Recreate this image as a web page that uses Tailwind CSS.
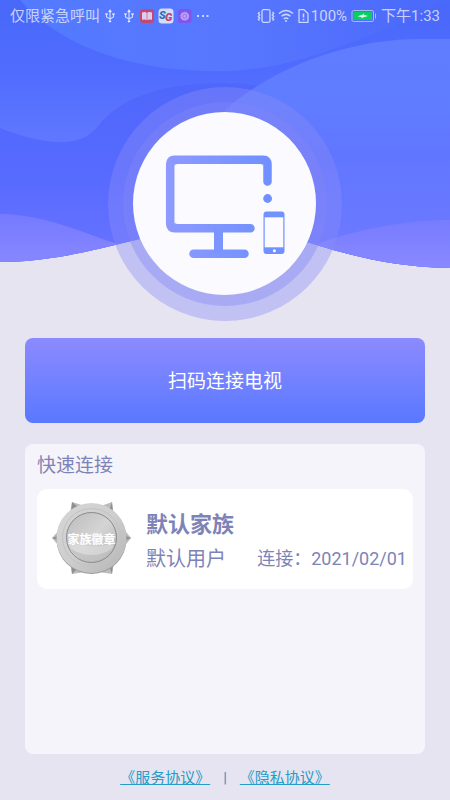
<!DOCTYPE html>
<html lang="zh-CN">
<head>
<meta charset="utf-8">
<meta name="viewport" content="width=device-width, initial-scale=1">
<title>扫码连接电视</title>
<script src="https://cdn.jsdelivr.net/npm/@tailwindcss/browser@4"></script>
</head>
<body class="bg-[#e6e4f0] font-['Roboto','Noto_Sans_CJK_SC',sans-serif]">
<div class="relative isolate flex min-h-screen flex-col">

  <!-- Wave backdrop -->
  <svg class="absolute inset-x-0 top-0 -z-10 h-[270px] w-full" viewBox="0 0 450 270" preserveAspectRatio="none" aria-hidden="true">
    <defs>
      <linearGradient id="base" gradientUnits="userSpaceOnUse" x1="0" y1="0" x2="0" y2="142"><stop offset="0" stop-color="#4868fa"/><stop offset=".5" stop-color="#506cfe"/><stop offset="1" stop-color="#6078ff"/></linearGradient>
      <linearGradient id="top" x1="0" y1="0" x2="1" y2="0"><stop offset="0" stop-color="#527aff"/><stop offset=".5" stop-color="#5877ff"/><stop offset="1" stop-color="#4a68fa"/></linearGradient>
      <linearGradient id="mid" gradientUnits="userSpaceOnUse" x1="0" y1="83" x2="0" y2="250"><stop offset="0" stop-color="#4f67fb"/><stop offset=".5" stop-color="#566aff"/><stop offset="1" stop-color="#6672ff"/></linearGradient>
      <linearGradient id="right" gradientUnits="userSpaceOnUse" x1="0" y1="39" x2="0" y2="268"><stop offset="0" stop-color="#5f7dff"/><stop offset=".3" stop-color="#607cff"/><stop offset=".5" stop-color="#6176ff"/><stop offset="1" stop-color="#6e7aff"/></linearGradient>
      <linearGradient id="low" gradientUnits="userSpaceOnUse" x1="0" y1="214" x2="0" y2="266"><stop offset="0" stop-color="#757aff"/><stop offset="1" stop-color="#8888ff"/></linearGradient>
      <clipPath id="edge"><path d="M0 0H450V268C395 267 355 257 310 243C260 228 190 227 140 239C95 250 50 262 0 262Z"/></clipPath>
    </defs>
    <g clip-path="url(#edge)">
      <rect width="450" height="270" fill="url(#base)"/>
      <path d="M20 0C60 46 130 71 215 71C285 71 330 50 390 28L450 0Z" fill="url(#top)"/>
      <path d="M0 128C28 139 78 154 98 126C124 92 175 83 222 83C290 83 345 110 450 130V270H0Z" fill="url(#mid)"/>
      <path d="M225 110C275 66 350 39 420 39H450V270H225Z" fill="url(#right)"/>
      <path d="M0 214C45 214 85 234 115 243L150 253V270H0Z" fill="url(#low)"/>
      <path d="M450 220C405 220 355 230 320 243L290 255V270H450Z" fill="url(#low)"/>
    </g>
  </svg>

  <!-- Status bar -->
  <header class="flex h-8 items-center justify-between px-[10px] text-[15px] leading-8 text-white/70">
    <div class="flex items-center gap-[3px]">
      <span>仅限紧急呼叫</span>
      <svg class="h-4 w-4" viewBox="0 0 16 16" fill="none" stroke="currentColor" stroke-width="1.2" aria-hidden="true"><path d="M7 2V14M3.500 6V9L7 11L10.500 9V6"/><path d="M5.500 4L7 1.500L8.500 4ZM2.500 5.500h2v1h-2zM9.500 5.500h2v1h-2zM6 13h2v1H6z" fill="currentColor" stroke-width=".5"/></svg>
      <svg class="h-4 w-4" viewBox="0 0 16 16" fill="none" stroke="currentColor" stroke-width="1.2" aria-hidden="true"><path d="M7 2V14M3.500 6V9L7 11L10.500 9V6"/><path d="M5.500 4L7 1.500L8.500 4ZM2.500 5.500h2v1h-2zM9.500 5.500h2v1h-2zM6 13h2v1H6z" fill="currentColor" stroke-width=".5"/></svg>
      <svg class="-ml-[2px] h-4 w-4" viewBox="0 0 16 16" aria-hidden="true"><rect x="1" y="1" width="14" height="14" rx="3" fill="#bf4a78"/><path d="M3 4.500Q6 3.500 7.700 4.700V12Q6 11 3 11.800ZM13 4.500Q10 3.500 8.300 4.700V12Q10 11 13 11.800Z" fill="#e0cdec"/></svg>
      <svg class="h-4 w-4" viewBox="0 0 16 16" aria-hidden="true"><rect x="0.500" y="0.500" width="15" height="15" rx="3.500" fill="#d5dcff"/><text x="1" y="11" font-family="Roboto" font-size="11" font-weight="900" font-style="italic" fill="#2474b4">S</text><text x="7" y="13" font-family="Roboto" font-size="11" font-weight="900" font-style="italic" fill="#c04468">G</text></svg>
      <svg class="h-4 w-4" viewBox="0 0 16 16" aria-hidden="true"><rect x="1" y="1" width="13.500" height="14" rx="2.500" fill="#8055ee"/><circle cx="7.700" cy="8.200" r="4" fill="#b9a0f5" stroke="#b9a0f5" stroke-dasharray="1.500 1"/><circle cx="7.700" cy="8.200" r="2" fill="none" stroke="#8d68ed" stroke-width=".8"/></svg>
      <svg class="h-4 w-4" viewBox="0 0 16 16" fill="currentColor" aria-hidden="true"><path d="M1 7h2v2H1zM6 7h2v2H6zM10.500 7h2v2h-2z"/></svg>
    </div>
    <div class="flex items-center">
      <svg class="h-4 w-5" viewBox="0 0 20 16" fill="none" stroke="currentColor" stroke-width="1.300" aria-hidden="true"><rect x="5" y="1.700" width="8" height="12.600" rx="1.500"/><path d="M2.500 4L1.300 5.500L2.700 7L1.300 8.500L2.700 10L1.300 11.500L2.500 12.500M15.500 4L16.700 5.500L15.300 7L16.700 8.500L15.300 10L16.700 11.500L15.500 12.500"/></svg>
      <svg class="h-4 w-[18px]" viewBox="0 0 18 16" fill="none" stroke="currentColor" stroke-width="1.500" aria-hidden="true"><path d="M2 5.500Q9 -.5 16 5.500M4.500 8.300Q9 4.500 13.500 8.300M6.700 11Q9 9 11.300 11"/><circle cx="9" cy="13" r="1" fill="currentColor" stroke="none"/></svg>
      <svg class="h-4 w-4" viewBox="0 0 16 16" fill="none" stroke="currentColor" stroke-width="1.300" aria-hidden="true"><path d="M4 1.700H9L13 5.500V14.300H4Z" stroke-linejoin="round"/><path d="M8.500 5.500V9.500M8.500 10.700V12.200" stroke-width="1.600"/></svg>
      <span>100%</span>
      <svg class="mx-1 h-4 w-[26px]" viewBox="0 0 26 16" fill="none" aria-hidden="true"><rect x="1" y="2.500" width="21.500" height="11" rx="1.500" stroke="#a9baf8" stroke-width="1"/><rect x="2.500" y="4" width="18.500" height="8" fill="#08cf63"/><path d="M6.500 8.200L12 6.500V5.500L13.500 7L17 8L11.500 9.500V10.500L10 9Z" fill="#e5ffee"/><path d="M24.500 5.500V10.500" stroke="#a9baf8" stroke-width="1"/></svg>
      <span>下午1:33</span>
    </div>
  </header>

  <main class="flex flex-1 flex-col px-[25px] pt-[55px]">
    <!-- Television and phone emblem -->
    <svg class="mx-auto h-[234px] w-[234px] shrink-0" viewBox="0 0 234 234" fill="none" role="img" aria-label="电视与手机">
      <defs><linearGradient id="tv" gradientUnits="userSpaceOnUse" x1="57" y1="0" x2="164" y2="0"><stop offset="0" stop-color="#8e9aff"/><stop offset="1" stop-color="#7090ff"/></linearGradient></defs>
      <circle cx="117" cy="117" r="117" fill="#8a8cf8" fill-opacity=".4"/>
      <circle cx="117" cy="117" r="102" fill="#8486f8" fill-opacity=".38"/>
      <circle cx="116.500" cy="116.500" r="91.500" fill="#fafaff"/>
      <g stroke="url(#tv)" stroke-width="8.500" stroke-linecap="round">
        <path d="M159.500 94.500V77Q159.500 72.800 155.500 72.800H66.500Q62.200 72.800 62.200 77V137Q62.200 141.200 66.500 141.200H142.500"/>
        <path d="M85.500 166.700H136.500"/>
      </g>
      <path d="M110.500 142V166" stroke="#7b94ff" stroke-width="9"/>
      <path d="M66.500 80V77H69.500Q66.500 77 66.500 80ZM155.300 80V77H152.300Q155.300 77 155.300 80ZM66.500 134V137H69.500Q66.500 137 66.500 134Z" fill="#7f96ff"/>
      <circle cx="159.600" cy="111.500" r="4.400" fill="#7090ff"/>
      <rect x="155.500" y="124.500" width="21" height="42.500" rx="3" fill="#7191ff"/>
      <rect x="156.700" y="130.300" width="18.600" height="30" fill="#fafaff"/>
      <circle cx="166.400" cy="163.700" r="1.500" fill="#fff"/>
    </svg>

    <button type="button" class="mt-[17px] h-[85px] w-full shrink-0 rounded-lg bg-linear-to-b from-[#8c8aff] to-[#5878ff] pt-1 text-[19px] text-white">扫码连接电视</button>

    <section class="mt-[21px] flex-1 rounded-lg bg-[#f5f4fa] px-3 pt-[10px] text-[#7e83b6]" aria-labelledby="quick">
      <h2 id="quick" class="text-[19px] leading-6">快速连接</h2>
      <button type="button" class="mt-[11px] flex h-[100px] w-full items-center rounded-[10px] bg-white pr-[6px] pl-[14px] text-left">
        <svg class="h-20 w-20 shrink-0" viewBox="0 0 80 80" aria-hidden="true">
          <defs>
            <linearGradient id="rim" x1="0" y1="0" x2="1" y2="1"><stop offset="0" stop-color="#d6d6d6"/><stop offset=".5" stop-color="#cecece"/><stop offset="1" stop-color="#b4b4b4"/></linearGradient>
            <linearGradient id="disc" x1="0" y1="0" x2="1" y2="1"><stop offset="0" stop-color="#bcbcbc"/><stop offset=".5" stop-color="#d4d4d4"/><stop offset="1" stop-color="#b4b4b4"/></linearGradient>
          </defs>
          <path d="M21 3L34 7H50L61 3L63 18L80 39L64 59L61 75L48 73H34L21 75L19 60L1 39L18 20Z" fill="#bcbcbc"/>
          <path d="M21 3L28 9L20 14ZM1 39L9 36V42ZM61 3L58 12L62 14ZM61 75L58 67L62 64ZM21 75L27 69L20 66ZM80 39L73 36V42Z" fill="#8f8f8f"/>
          <circle cx="40.500" cy="40" r="35" fill="#9c9c9c"/>
          <circle cx="40.500" cy="39" r="35" fill="url(#rim)"/>
          <circle cx="40.500" cy="38.500" r="29" stroke="#c2c2c2" fill="none"/>
          <circle cx="40.500" cy="38.500" r="25" fill="url(#disc)" stroke="#8a8a8a" stroke-width="1"/>
          <path d="M18 44Q41 51 63 44A23 23 0 0 1 18 44Z" fill="#dedede" opacity=".6"/>
          <path d="M20 50Q41 62 61 50A23 23 0 0 1 20 50Z" fill="#999" opacity=".3"/>
          <text x="40.500" y="44.500" text-anchor="middle" font-family="Noto Sans CJK SC" font-size="12" font-weight="700" fill="#fff">家族徽章</text>
        </svg>
        <span class="ml-[15px] flex flex-1 flex-col gap-[2px] pt-[6px]">
          <span class="text-[22px] leading-8 font-bold">默认家族</span>
          <span class="flex items-center justify-between whitespace-nowrap">
            <span class="text-[20px] leading-8">默认用户</span>
            <span class="text-[18px] leading-8">连接：2021/02/01</span>
          </span>
        </span>
      </button>
    </section>
  </main>

  <footer class="flex h-[46px] items-center justify-center gap-[13px] pt-[3px] text-[15px] text-[#249cc8]">
    <a href="#service" class="underline">《服务协议》</a>
    <span>|</span>
    <a href="#privacy" class="underline">《隐私协议》</a>
  </footer>
</div>
</body>
</html>
